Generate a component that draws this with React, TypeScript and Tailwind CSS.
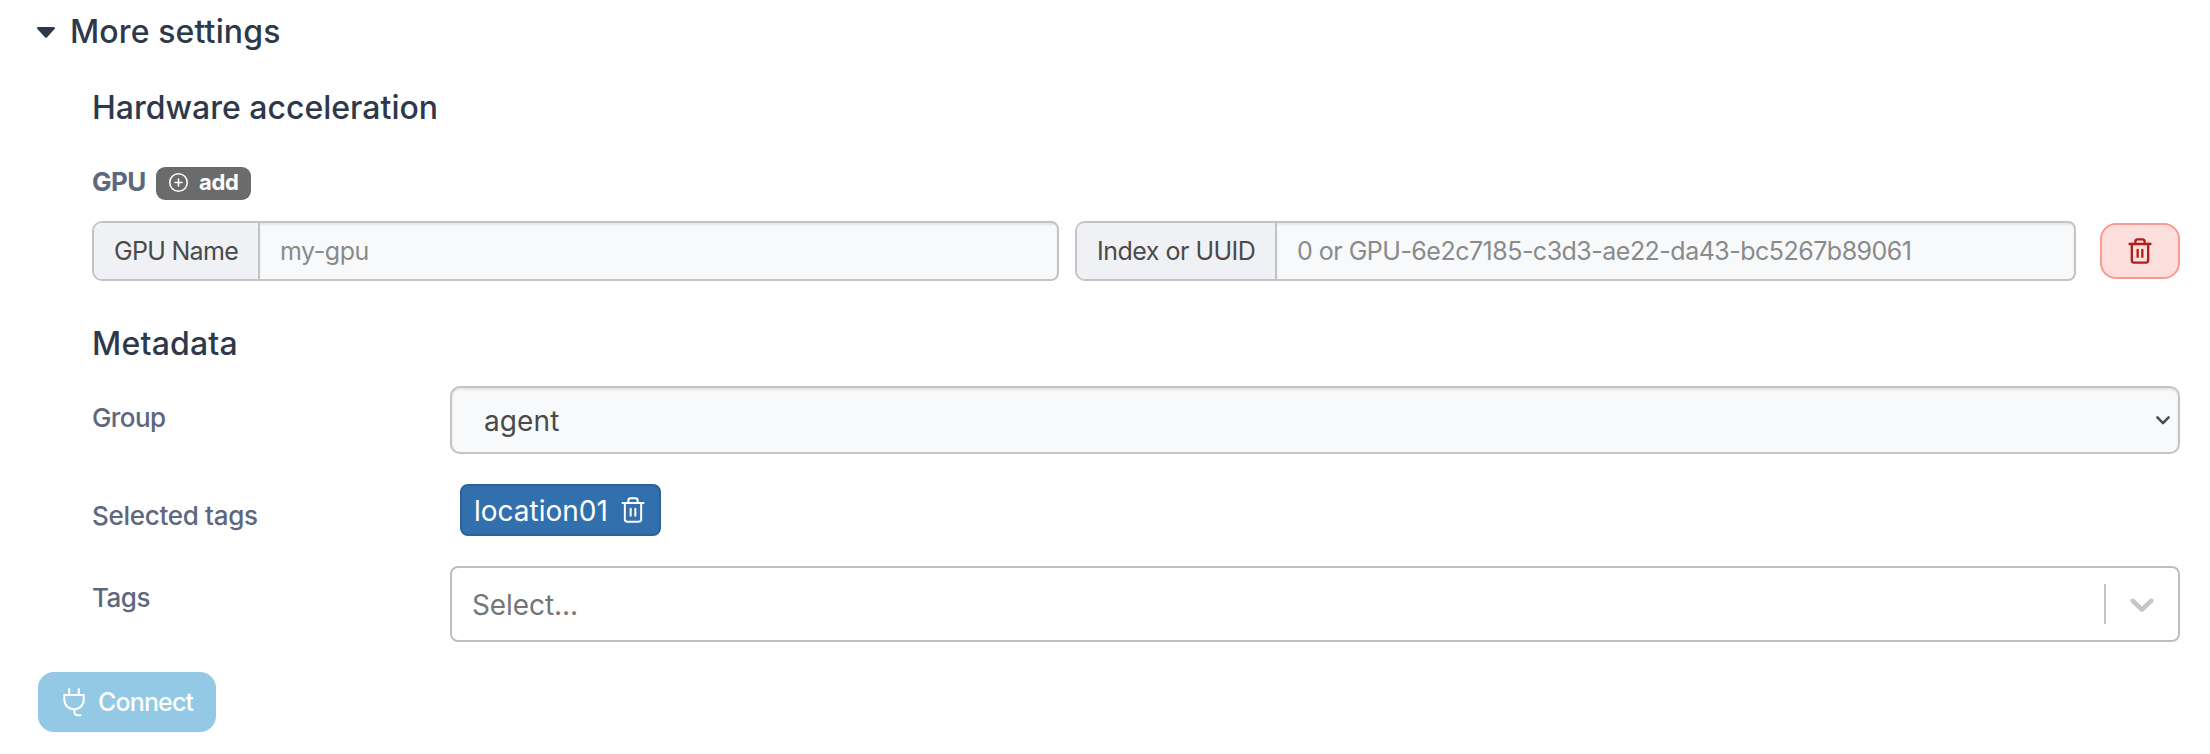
import React from "react";
import { CirclePlus, Trash2 } from "lucide-react";

const insetShadow = "shadow-[inset_0_2px_2px_rgba(0,0,0,0.075)]";

function AddonInput({ label, placeholder, className, addonClass, labelClass, placeholderClass }: {
  label: string;
  placeholder: string;
  className: string;
  addonClass: string;
  labelClass: string;
  placeholderClass: string;
}) {
  return (
    <div className={`flex h-[60px] overflow-hidden rounded-l-[10px] rounded-r-lg border-2 border-[#c3c3c3] bg-[#f8f9fb] text-[25px] leading-[57px] whitespace-nowrap ${className}`}>
      <div className={`shrink-0 border-r-2 border-[#c3c3c3] bg-[#f0f1f5] pl-5 text-[#4a4a4a] ${addonClass}`}>
        <span className={labelClass}>{label}</span>
      </div>
      <div className={`flex-1 pl-5 text-[#8a8a8a] ${insetShadow}`}>
        <span className={placeholderClass}>{placeholder}</span>
      </div>
    </div>
  );
}

function PlugIcon() {
  return (
    <svg width="24" height="32" viewBox="0 0 24 32" fill="none" stroke="currentColor" strokeWidth="2" strokeLinecap="round" strokeLinejoin="round">
      <path d="M7.2 3v5.6M16.8 3v5.6M2.3 8.9h19.4v4.4c0 6-4.2 10-9.7 10s-9.7-4-9.7-10zM12.4 23.3v2.1c0 2.7 1.5 3.9 3.6 3.9h2.4" />
    </svg>
  );
}

function FieldRow({ label, children, labelClass = "" }: { label: string; children: React.ReactNode; labelClass?: string }) {
  return (
    <div className="flex items-start">
      <div className={`w-[358px] shrink-0 text-[26px] leading-[63px] font-medium text-[#5d677e] ${labelClass}`}>{label}</div>
      {children}
    </div>
  );
}

export default function App() {
  return (
    <div className="flex h-[754px] w-[2210px] flex-col overflow-hidden bg-white pr-[30px] pl-[38px] font-['Inter',sans-serif] [font-optical-sizing:none]">
      <div className="flex h-[62px] items-center text-[32px] font-medium text-[#2e384b]">
        <svg className="-ml-px mt-[3px] mr-[15px]" width="18" height="11" viewBox="0 0 18 11" fill="currentColor">
          <path d="M1.3 0h15.4c1.1 0 1.7 1.3.9 2.1l-7.5 8.2c-.6.7-1.6.7-2.2 0L.4 2.1C-.4 1.3.2 0 1.3 0z" />
        </svg>
        <span className="pt-0.5 tracking-[0.12px]">More settings</span>
      </div>

      <div className="flex flex-col pl-[54px]">
        <div className="h-[90px] text-[32px] leading-[92px] font-medium text-[#2e384b]">Hardware acceleration</div>

        <div className="flex h-[69px] items-start">
          <span className="mt-[13px] w-16 text-[26px] leading-[33px] font-bold tracking-[-0.6px] text-[#5d677e]">GPU</span>
          <div className="mt-[15px] flex h-[33px] w-[95px] items-center rounded-[9px] bg-[#6b6b6b] pb-0.5 pl-3 text-white">
            <CirclePlus size={21} strokeWidth={1.8} />
            <span className="ml-2.5 text-[22px] leading-[31px] font-bold tracking-[-0.3px]">add</span>
          </div>
        </div>

        <div className="flex items-start">
          <AddonInput label="GPU Name" placeholder="my-gpu" className="w-[967px]" addonClass="w-[166px]" labelClass="tracking-[-0.7px]" placeholderClass="tracking-[-0.45px]" />
          <AddonInput label="Index or UUID" placeholder="0 or GPU-6e2c7185-c3d3-ae22-da43-bc5267b89061" className="ml-4 w-[1001px]" addonClass="w-[200px]" labelClass="tracking-[-0.5px]" placeholderClass="tracking-[-0.51px]" />
          <div className="mt-0.5 ml-6 flex h-14 w-20 items-center justify-center rounded-2xl border-2 border-[#fa9a92] bg-[#fcdedc] text-[#ae1f1b]">
            <Trash2 size={28} strokeWidth={2} />
          </div>
        </div>

        <div className="mt-5 h-[85px] text-[32px] leading-[85px] font-medium tracking-[0.2px] text-[#2e384b]">Metadata</div>

        <FieldRow label="Group" labelClass="tracking-[-0.6px]">
          <div className={`flex h-[68px] flex-1 items-center justify-between rounded-[10px] border-2 border-[#c3c3c3] bg-[#f8f9fb] pt-px pr-2 pl-8 text-[28px] text-[#4a4a4a] ${insetShadow}`}>
            <span className="tracking-[0.1px]">agent</span>
            <svg width="14" height="9" viewBox="0 0 14 9" fill="none" stroke="currentColor" strokeWidth="2.5" strokeLinecap="round" strokeLinejoin="round">
              <path d="M1.4 1.4 7 7.2l5.6-5.8" />
            </svg>
          </div>
        </FieldRow>

        <div className="mt-[30px] flex">
          <FieldRow label="Selected tags" labelClass="tracking-[-0.3px]">
            <div className="ml-2.5 flex h-[52px] w-[201px] items-center rounded-lg border-2 border-[#2c629b] bg-[#326fad] pl-3 text-[28px] leading-[50px] text-white">
              <span className="w-[145px] pt-px">location01</span>
              <Trash2 size={28} strokeWidth={1.7} className="shrink-0" />
            </div>
          </FieldRow>
        </div>

        <div className="mt-[19px]">
          <FieldRow label="Tags" labelClass="tracking-[-0.5px]">
            <div className="flex h-[76px] flex-1 items-center rounded-lg border-2 border-[#bfbfbf] bg-white pl-5 text-[28px] text-[#757575]">
              <span className="flex-1 pt-px tracking-[-0.1px]">Select...</span>
              <div className="h-10 w-0.5 bg-[#c4c4c4]" />
              <svg className="mx-4 text-[#c6c6c6]" width="40" height="40" viewBox="0 0 20 20" fill="currentColor">
                <path d="M4.516 7.548c0.436-0.446 1.043-0.481 1.576 0l3.908 3.747 3.908-3.747c0.533-0.481 1.141-0.446 1.574 0 0.436 0.445 0.408 1.197 0 1.615-0.406 0.418-4.695 4.502-4.695 4.502-0.217 0.223-0.502 0.335-0.787 0.335s-0.57-0.112-0.789-0.335c0 0-4.287-4.084-4.695-4.502s-0.436-1.17 0-1.615z" />
              </svg>
            </div>
          </FieldRow>
        </div>
      </div>

      <div className="mt-[30px] flex h-[60px] w-[178px] items-center rounded-2xl bg-[#93c9e4] pl-6 text-[25px] font-medium text-white">
        <PlugIcon />
        <span className="ml-3 pt-px tracking-[-0.85px]">Connect</span>
      </div>
    </div>
  );
}
